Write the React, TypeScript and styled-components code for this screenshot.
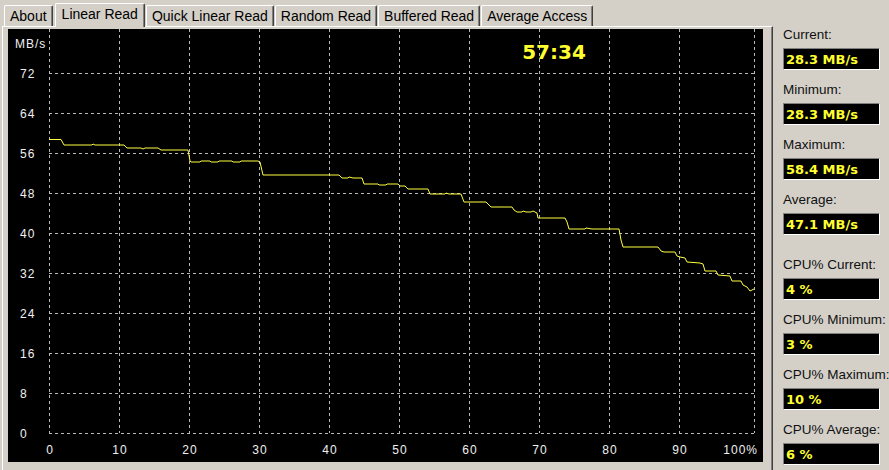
import React from 'react'
import styled, { createGlobalStyle } from 'styled-components'

const GlobalStyle = createGlobalStyle`
  html, body {
    margin: 0;
    padding: 0;
    background: #d4d0c8;
    overflow: hidden;
  }
`

const Window = styled.div`
  width: 889px;
  height: 470px;
  display: flex;
  background: #d4d0c8;
  font-family: 'Liberation Sans', Arial, sans-serif;
  color: #000;
  overflow: hidden;
`

const LeftSide = styled.div`
  width: 773px;
  height: 470px;
  padding-left: 2px;
  box-sizing: border-box;
  display: flex;
  flex-direction: column;
`

const TabStrip = styled.div`
  height: 26px;
  padding-left: 2px;
  display: flex;
  align-items: flex-end;
  gap: 1px;
`

const Tab = styled.div<{ $active?: boolean }>`
  position: relative;
  z-index: ${p => (p.$active ? 1 : 0)};
  height: ${p => (p.$active ? 24 : 21)}px;
  margin-bottom: ${p => (p.$active ? -1 : 0)}px;
  margin-left: ${p => (p.$active ? 1 : 0)}px;
  padding: 0 ${p => (p.$active ? 6 : 5)}px ${p => (p.$active ? 3 : 0)}px;
  box-sizing: border-box;
  display: flex;
  align-items: center;
  background: #d4d0c8;
  border-top: 1px solid #fff;
  border-left: 1px solid #fff;
  border-right: 1px solid #404040;
  border-radius: 2px 2px 0 0;
  box-shadow: inset -1px 0 #808080;
  font-size: 14px;
  white-space: nowrap;
`

const Panel = styled.div`
  flex: 1;
  border-top: 1px solid #fff;
  border-left: 1px solid #fff;
  border-right: 1px solid #404040;
  box-shadow: inset -1px 0 #808080;
  padding: 2px 8px 0 5px;
`

const ChartSvg = styled.svg`
  display: block;
  width: 755px;
  height: 433px;
  background: #000;
`

const AxisText = styled.text`
  font-family: 'Liberation Sans', Arial, sans-serif;
  font-size: 12px;
  letter-spacing: 1px;
  fill: #f0f0f0;
`

const Timer = styled.text`
  font-family: 'DejaVu Sans', Verdana, sans-serif;
  font-weight: bold;
  font-size: 20px;
  fill: #ffff30;
`

const Stats = styled.div`
  width: 106px;
  margin-left: 10px;
  padding-top: 27px;
  display: flex;
  flex-direction: column;
  gap: 22px;
`

const StatGroup = styled.div`
  display: flex;
  flex-direction: column;
  gap: 12px;
`

const Field = styled.div`
  display: flex;
  flex-direction: column;
  gap: 5px;
`

const Label = styled.div`
  font-size: 13.5px;
  line-height: 16px;
  height: 16px;
  white-space: nowrap;
  color: #101010;
`

const ValueBox = styled.div`
  width: 97px;
  height: 22px;
  box-sizing: border-box;
  background: #000;
  border-top: 1px solid #808080;
  border-left: 1px solid #808080;
  border-bottom: 1px solid #fff;
  border-right: 1px solid #fff;
  padding-left: 2px;
  display: flex;
  align-items: center;
  font-family: 'DejaVu Sans', Verdana, sans-serif;
  font-weight: bold;
  font-size: 13px;
  color: #ffff30;
`

const tabs = ['About', 'Linear Read', 'Quick Linear Read', 'Random Read', 'Buffered Read', 'Average Access']

const transferStats = [
  { label: 'Current:', value: '28.3 MB/s' },
  { label: 'Minimum:', value: '28.3 MB/s' },
  { label: 'Maximum:', value: '58.4 MB/s' },
  { label: 'Average:', value: '47.1 MB/s' },
]

const cpuStats = [
  { label: 'CPU% Current:', value: '4 %' },
  { label: 'CPU% Minimum:', value: '3 %' },
  { label: 'CPU% Maximum:', value: '10 %' },
  { label: 'CPU% Average:', value: '6 %' },
]

// chart is drawn in page coordinates (viewBox starts where the black area starts)
const X0 = 49
const Y0 = 433
const yTicks = [72, 64, 56, 48, 40, 32, 24, 16, 8, 0]
const xTicks = [0, 10, 20, 30, 40, 50, 60, 70, 80, 90]

const readCurve = [
  [49, 139.5], [61, 139.5], [64, 145], [92, 145], [93, 144], [95, 145], [124, 145],
  [127, 148], [141, 148], [143, 149], [145, 148], [158, 148], [161, 150], [188, 150],
  [190, 161], [191, 162], [200, 162], [201, 161], [210, 161], [211, 162], [218, 162],
  [219, 161], [232, 161], [233, 162], [240, 162], [241, 161], [258, 161], [260, 162],
  [263, 175], [339, 175], [342, 178], [348, 178], [349, 177], [353, 178], [362, 178],
  [364, 184], [378, 184], [379, 185], [386, 185], [387, 184], [398, 184], [400, 186],
  [405, 186], [408, 189], [428, 189], [430, 194], [445, 194], [446, 193], [449, 194],
  [461, 194], [464, 202], [486, 202], [489, 205], [491, 207], [512, 207], [514, 210],
  [517, 212], [522, 212], [523, 211], [526, 212], [531, 212], [533, 211], [537, 213],
  [538, 218], [565, 218], [567, 222], [569, 229], [585, 229], [586, 228], [592, 229],
  [619, 229], [621, 240], [623, 247], [658, 247], [661, 251], [664, 252], [675, 252],
  [677, 256], [680, 257], [685, 258], [687, 262], [700, 263], [703, 264], [705, 271],
  [716, 271], [718, 275], [730, 276], [732, 281], [741, 281], [743, 285], [747, 287],
  [750, 291], [752, 290], [754, 289],
]

const Chart = () => (
  <ChartSvg viewBox='8 29 755 433'>
    <g stroke='#b8b8b8' strokeWidth={1} strokeDasharray='3 3' shapeRendering='crispEdges'>
      {yTicks.map(v => (
        <line key={v} x1={X0} x2={755} y1={Y0 - v * 5 + 0.5} y2={Y0 - v * 5 + 0.5} />
      ))}
      {xTicks.map(v => (
        <line key={v} x1={X0 + v * 7 + 0.5} x2={X0 + v * 7 + 0.5} y1={29} y2={Y0} />
      ))}
      <line x1={754.5} x2={754.5} y1={29} y2={Y0} />
    </g>

    <AxisText x={15} y={48}>MB/s</AxisText>
    {yTicks.map(v => (
      <AxisText key={v} x={20} y={Y0 - v * 5 + 4.5}>{v}</AxisText>
    ))}
    {xTicks.map(v => (
      <AxisText key={v} x={X0 + v * 7 + 1} y={453.5} textAnchor='middle'>{v}</AxisText>
    ))}
    <AxisText x={758} y={453.5} textAnchor='end'>100%</AxisText>

    <polyline
      points={readCurve.map(p => p.join(',')).join(' ')}
      fill='none'
      stroke='#ffff40'
      strokeWidth={1}
    />

    <Timer x={554} y={59} textAnchor='middle'>57:34</Timer>
  </ChartSvg>
)

const StatField = ({ label, value }: { label: string; value: string }) => (
  <Field>
    <Label>{label}</Label>
    <ValueBox>{value}</ValueBox>
  </Field>
)

export default function App() {
  return (
    <Window>
      <GlobalStyle />
      <LeftSide>
        <TabStrip>
          {tabs.map(t => (
            <Tab key={t} $active={t === 'Linear Read'}>{t}</Tab>
          ))}
        </TabStrip>
        <Panel>
          <Chart />
        </Panel>
      </LeftSide>

      <Stats>
        <StatGroup>
          {transferStats.map(s => <StatField key={s.label} {...s} />)}
        </StatGroup>
        <StatGroup>
          {cpuStats.map(s => <StatField key={s.label} {...s} />)}
        </StatGroup>
      </Stats>
    </Window>
  )
}
